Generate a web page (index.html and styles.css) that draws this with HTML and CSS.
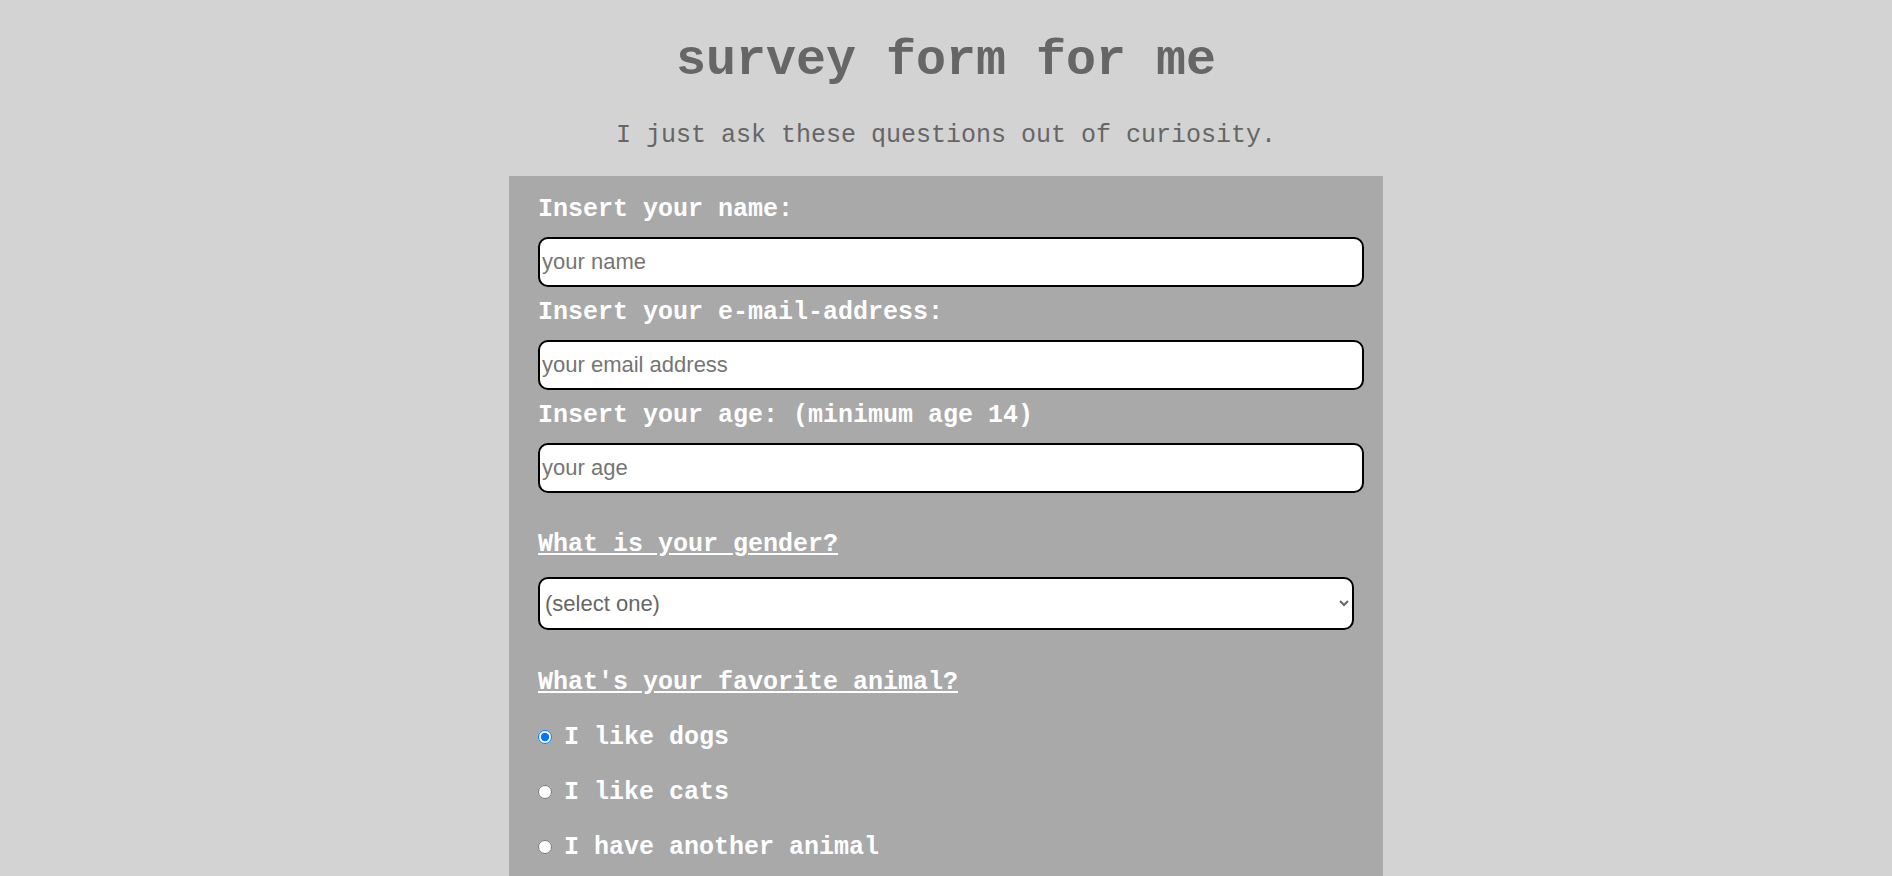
FILE: index.html
```html
<!DOCTYPE html>
<html lang="en">
<head>
<meta charset="utf-8">
<title>survey form for me</title>
<link rel="stylesheet" href="styles.css">
</head>
<body>
<header class="header">
  <h1 class="title">survey form for me</h1>
  <p class="subtitle">I just ask these questions out of curiosity.</p>
</header>
<form class="survey">
  <label class="field-label" for="name">Insert your name:</label>
  <input class="text-input" id="name" type="text" placeholder="your name">
  <label class="field-label" for="email">Insert your e-mail-address:</label>
  <input class="text-input" id="email" type="email" placeholder="your email address">
  <label class="field-label" for="age">Insert your age: (minimum age 14)</label>
  <input class="text-input" id="age" type="number" placeholder="your age">

  <p class="question">What is your gender?</p>
  <select class="select" id="gender">
    <option>(select one)</option>
    <option>male</option>
    <option>female</option>
    <option>other</option>
  </select>

  <p class="question">What's your favorite animal?</p>
  <div class="radio-group">
    <label class="radio-row"><input class="radio" type="radio" name="animal" value="dogs" checked>I like dogs</label>
    <label class="radio-row"><input class="radio" type="radio" name="animal" value="cats">I like cats</label>
    <label class="radio-row"><input class="radio" type="radio" name="animal" value="other">I have another animal</label>
  </div>
</form>
</body>
</html>
```
FILE: styles.css
```css
html, body {
  margin: 0;
  padding: 0;
}

body {
  background: #d3d3d3;
  font-family: "Liberation Mono", "Courier New", monospace;
  color: #666;
}

.header {
  text-align: center;
}

.title {
  margin: 33px 0 0;
  font-size: 50px;
  line-height: 56px;
  font-weight: bold;
  color: #666;
}

.subtitle {
  margin: 33px 0 0;
  font-size: 25px;
  line-height: 28px;
  font-weight: normal;
  color: #666;
}

.survey {
  box-sizing: border-box;
  width: 874px;
  margin: 26px auto 0;
  padding: 20px 19px 40px 29px;
  background: #a9a9a9;
  display: flex;
  flex-direction: column;
  align-items: flex-start;
}

.field-label {
  font-size: 25px;
  line-height: 28px;
  font-weight: bold;
  color: #fff;
  margin-bottom: 13px;
}

.text-input {
  box-sizing: border-box;
  width: 826px;
  height: 50px;
  margin: 0 0 12px;
  padding: 0 2px;
  border: 2px solid #000;
  border-radius: 10px;
  background: #fff;
  font-family: "Liberation Sans", Arial, sans-serif;
  font-size: 22px;
  color: #333;
  outline: none;
}

.text-input::placeholder {
  color: #757575;
}

.question {
  margin: 26px 0 18px;
  font-size: 25px;
  line-height: 28px;
  font-weight: bold;
  color: #fff;
  text-decoration: underline;
}

.select {
  box-sizing: border-box;
  width: 816px;
  height: 53px;
  margin: 0 0 13px;
  padding: 0 1px;
  border: 2px solid #000;
  border-radius: 10px;
  background: #fff;
  font-family: "Liberation Sans", Arial, sans-serif;
  font-size: 22px;
  color: #666;
  outline: none;
}

.radio-group {
  margin-top: 9px;
  display: flex;
  flex-direction: column;
  gap: 27px;
}

.radio-row {
  display: flex;
  align-items: center;
  font-size: 25px;
  line-height: 28px;
  font-weight: bold;
  color: #fff;
}

.radio {
  width: 14px;
  height: 14px;
  margin: 0 12px 2px 0;
}
```
